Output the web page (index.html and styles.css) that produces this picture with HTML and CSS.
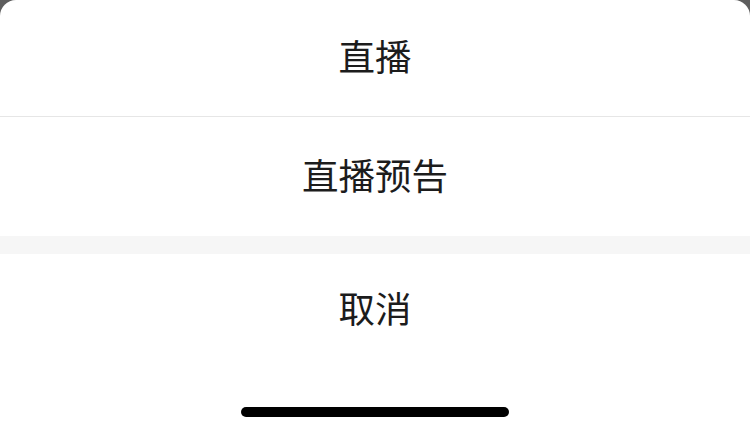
FILE: index.html
```html
<!DOCTYPE html>
<html lang="zh">
<head>
<meta charset="utf-8">
<link rel="stylesheet" href="styles.css">
</head>
<body>
<div class="sheet">
  <div class="item item-first">直播</div>
  <div class="item item-second">直播预告</div>
  <div class="gap"></div>
  <div class="item item-cancel">取消</div>
  <div class="safe"><div class="home-bar"></div></div>
</div>
</body>
</html>
```
FILE: styles.css
```css
html, body {
  margin: 0;
  padding: 0;
  width: 750px;
  height: 433px;
  overflow: hidden;
  background: #5e5e5e;
}
.sheet {
  width: 750px;
  height: 433px;
  background: #ffffff;
  border-radius: 16px 16px 0 0;
  display: flex;
  flex-direction: column;
  font-family: "Noto Sans CJK SC", "Noto Sans", sans-serif;
  color: #1c1c1c;
}
.item {
  display: flex;
  align-items: center;
  justify-content: center;
  font-size: 36.5px;
  line-height: 1;
  box-sizing: border-box;
  padding-bottom: 3px;
}
.item-first {
  height: 117px;
  border-bottom: 1px solid #e6e6e6;
}
.item-second {
  height: 119px;
}
.gap {
  height: 18px;
  background: #f6f6f6;
}
.item-cancel {
  height: 112px;
}
.safe {
  flex: 1;
  display: flex;
  justify-content: center;
  padding-top: 41px;
}
.home-bar {
  width: 268px;
  height: 10px;
  border-radius: 5px;
  background: #000000;
}
```
